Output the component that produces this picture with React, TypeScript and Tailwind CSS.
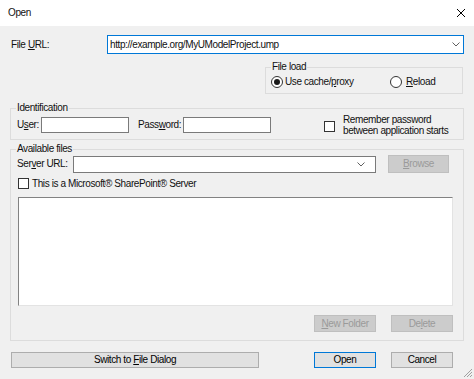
import React from "react";

const U = ({ children }: { children: React.ReactNode }) => (
  <span className="underline underline-offset-[1px] decoration-1">{children}</span>
);

function Chevron() {
  return (
    <svg width="8" height="5" viewBox="0 0 8 5">
      <path d="M0.5 0.5 L4 4 L7.5 0.5" fill="none" stroke="#606060" strokeWidth="1" />
    </svg>
  );
}

function Radio({ checked }: { checked?: boolean }) {
  return (
    <span className="w-[12px] h-[12px] rounded-full border border-[#333333] bg-white flex items-center justify-center shrink-0">
      {checked && <span className="w-[6px] h-[6px] rounded-full bg-[#1a1a1a]" />}
    </span>
  );
}

function Check() {
  return <span className="w-[11px] h-[11px] border border-[#333333] bg-white shrink-0 block" />;
}

function Btn({
  children,
  w,
  h = "h-[17px]",
  disabled,
  primary,
}: {
  children: React.ReactNode;
  w: string;
  h?: string;
  disabled?: boolean;
  primary?: boolean;
}) {
  const cls = disabled
    ? "bg-[#cccccc] border-[#bfbfbf] text-[#9a9a9a]"
    : primary
    ? "bg-[#e1e1e1] border-[#0078d7] text-black"
    : "bg-[#e1e1e1] border-[#adadad] text-black";
  return (
    <div className={`${w} ${h} border ${cls} flex items-center justify-center shrink-0`}>
      <span>{children}</span>
    </div>
  );
}

export default function App() {
  return (
    <div className="w-[474px] h-[379px] bg-[#f0f0f0] relative overflow-hidden text-[#111111] text-[10px] leading-[12px] tracking-[-0.4px] font-['Liberation_Sans','Arial',sans-serif]">
      {/* Title bar */}
      <div className="h-[26px] bg-white flex items-center justify-between pl-[8px] pr-[8px]">
        <span>Open</span>
        <svg width="10" height="10" viewBox="0 0 10 10">
          <path d="M1 1L9 9M9 1L1 9" stroke="#000" strokeWidth="1" />
        </svg>
      </div>

      {/* File URL row */}
      <div className="mt-[9px] flex items-center pl-[11px] h-[19px]">
        <div className="w-[96px]">
          File <U>U</U>RL:
        </div>
        <div className="w-[357px] h-[19px] border border-[#0078d7] bg-white flex items-center justify-between pl-[2px] pr-[3px]">
          <span>http://example.org/MyUModelProject.ump</span>
          <Chevron />
        </div>
      </div>

      {/* File load */}
      <fieldset className="mt-[7px] ml-[265px] w-[198px] border border-[#dcdcdc]">
        <legend className="ml-[5px] px-[1px] leading-[12px]">File load</legend>
        <div className="pt-[3px] pb-[5px] pl-[5px]">
          <div className="flex items-center h-[12px]">
            <div className="w-[119px] flex items-center gap-[2px]">
              <Radio checked />
              <span>
                Use cache/<U>p</U>roxy
              </span>
            </div>
            <div className="flex items-center gap-[4px]">
              <Radio />
              <span>
                <U>R</U>eload
              </span>
            </div>
          </div>
        </div>
      </fieldset>

      {/* Identification */}
      <fieldset className="mt-[8px] ml-[10px] w-[454px] border border-[#dcdcdc]">
        <legend className="ml-[5px] px-[1px] leading-[12px]">Identification</legend>
        <div className="flex items-center h-[22px] pl-[6px] mb-[3px]">
          <div className="w-[24px]">
            U<U>s</U>er:
          </div>
          <div className="w-[88px] h-[16px] border border-[#7a7a7a] bg-white" />
          <div className="ml-[9px] w-[45px]">
            Pass<U>w</U>ord:
          </div>
          <div className="w-[88px] h-[16px] border border-[#7a7a7a] bg-white" />
          <div className="ml-[53px] mt-[2px]">
            <Check />
          </div>
          <div className="ml-[8px] leading-[11px]">
            Remember password
            <br />
            between application starts
          </div>
        </div>
      </fieldset>

      {/* Available files */}
      <fieldset className="mt-[3px] ml-[10px] w-[454px] border border-[#dcdcdc]">
        <legend className="ml-[5px] px-[1px] leading-[12px]">Available files</legend>
        <div className="flex items-center h-[18px] pl-[6px]">
          <div className="w-[56px]">
            Ser<U>v</U>er URL:
          </div>
          <div className="w-[303px] h-[17px] border border-[#7a7a7a] bg-white flex items-center justify-end pr-[10px]">
            <Chevron />
          </div>
          <div className="ml-[12px]">
            <Btn w="w-[61px]" h="h-[18px]" disabled>
              <U>B</U>rowse
            </Btn>
          </div>
        </div>
        <div className="mt-[5px] h-[11px] flex items-center pl-[7px] gap-[3px]">
          <Check />
          <span>This is a Microsoft® SharePoint® Server</span>
        </div>
        <div className="mt-[8px] ml-[7px] w-[435px] h-[109px] bg-white border border-t-[#828282] border-l-[#828282] border-r-[#e3e3e3] border-b-[#e3e3e3]" />
        <div className="mt-[9px] mb-[8px] ml-[7px] w-[435px] h-[17px] flex justify-end gap-[15px]">
          <Btn w="w-[62px]" disabled>
            <U>N</U>ew Folder
          </Btn>
          <Btn w="w-[62px]" disabled>
            De<U>l</U>ete
          </Btn>
        </div>
      </fieldset>

      {/* Bottom buttons */}
      <div className="mt-[11px] flex items-center pl-[11px]">
        <Btn w="w-[248px]" h="h-[16px]">
          Switch to <U>F</U>ile Dialog
        </Btn>
        <div className="ml-[55px]">
          <Btn w="w-[62px]" h="h-[16px]" primary>
            Open
          </Btn>
        </div>
        <div className="ml-[15px]">
          <Btn w="w-[62px]" h="h-[16px]">
            Cancel
          </Btn>
        </div>
      </div>

      {/* Resize grip */}
      <svg className="absolute right-[1px] bottom-[1px]" width="11" height="11" viewBox="0 0 11 11">
        <path d="M10 2 L2 10 M10 5 L5 10 M10 8 L8 10" stroke="#a0a0a0" strokeWidth="1" />
      </svg>
    </div>
  );
}
